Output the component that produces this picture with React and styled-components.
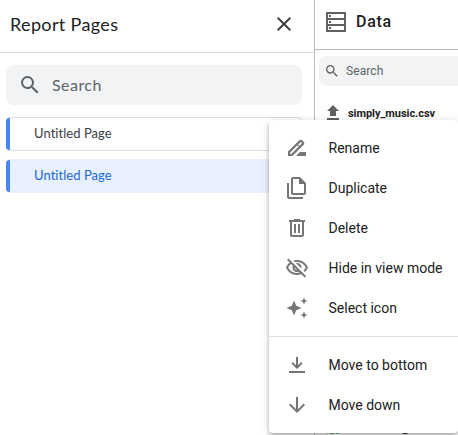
import React from 'react';
import styled, { createGlobalStyle } from 'styled-components';

const GlobalStyle = createGlobalStyle`
  * { box-sizing: border-box; }
  body { margin: 0; overflow: hidden; background: #fff; font-family: Roboto, "Liberation Sans", sans-serif; }
`;

const Screen = styled.main`
  position: relative;
  display: flex;
  width: 458px;
  height: 435px;
  overflow: hidden;
`;

const PagesPanel = styled.aside`
  width: 314px;
  flex: none;
`;

const PagesHeader = styled.header`
  display: flex;
  align-items: center;
  justify-content: space-between;
  height: 53px;
  padding: 0 18px 4px 10px;
  border-bottom: 1px solid #dadce0;
`;

const PagesTitle = styled.h1`
  margin: 0;
  font: 400 18px/24px Lato, sans-serif;
  letter-spacing: 0.35px;
  color: #202124;
`;

const Icon = styled.svg`
  display: block;
  flex: none;
  width: ${(p) => p.$size || 24}px;
  height: ${(p) => p.$size || 24}px;
  fill: ${(p) => p.$color || '#757575'};
`;

const PagesSearch = styled.div`
  display: flex;
  align-items: center;
  gap: 10px;
  width: 296px;
  height: 40px;
  margin: 12px 0 12px 6px;
  padding: 0 12px 1px;
  border-radius: 8px;
  background: #f1f3f4;
  color: #5f6368;
  font: 400 16px/24px Lato, sans-serif;
  letter-spacing: 0.45px;
`;

const PageItem = styled.div`
  display: flex;
  align-items: center;
  width: 296px;
  height: 34px;
  margin: 0 0 8px 6px;
  padding: 0 0 2px 28px;
  border: solid ${(p) => (p.$active ? '#e8f0fe' : '#dadce0')};
  border-width: 1px 1px 1px 0;
  border-radius: 4px;
  background: linear-gradient(to right, #4285f4 4px, transparent 4px) border-box,
    ${(p) => (p.$active ? '#e8f0fe' : '#fff')};
  color: ${(p) => (p.$active ? '#1967d2' : '#3c4043')};
  font: 400 13px/20px Lato, sans-serif;
  letter-spacing: 0.05px;
`;

const DataPanel = styled.section`
  flex: 1;
  min-width: 0;
  border-left: 1px solid #b9bac0;
  overflow: hidden;
`;

const DataHeader = styled.header`
  display: flex;
  align-items: center;
  gap: 10px;
  height: 50px;
  padding: 0 0 6px 11px;
  border-bottom: 1px solid #b9bac0;
`;

const DataTitle = styled.h2`
  margin: 0;
  font: 500 16px/24px Roboto, sans-serif;
  letter-spacing: 0.7px;
  color: #202124;
`;

const DataSearch = styled.div`
  display: flex;
  align-items: center;
  gap: 6px;
  width: 180px;
  height: 30px;
  margin: 6px 0 0 4px;
  padding-left: 5px;
  border-radius: 8px;
  background: #f1f3f4;
  color: #5f6368;
  font-size: 12px;
  letter-spacing: 0.1px;
`;

const SourceRow = styled.div`
  display: flex;
  align-items: center;
  gap: 7px;
  height: 24px;
  margin-top: 15px;
  padding-left: 10px;
  font-size: 11px;
  font-weight: 700;
  letter-spacing: -0.04px;
  color: #212121;
`;

const FieldRow = styled.div`
  display: flex;
  align-items: center;
  gap: 7px;
  height: 18px;
  margin-top: 295px;
  padding-left: 11px;
  font-size: 11px;
  letter-spacing: -0.6px;
  color: #212121;
`;

const FieldType = styled.span`
  width: 15px;
  color: #34a853;
  font-size: 7px;
  letter-spacing: 0;
  line-height: 12px;
  padding-top: 6px;
`;

const Menu = styled.nav`
  position: absolute;
  left: 269px;
  top: 120px;
  width: 189px;
  height: 313px;
  padding: 8px 0;
  border-radius: 4px;
  background: #fff;
  box-shadow: 0 2px 4px -1px rgba(0, 0, 0, 0.2), 0 4px 5px rgba(0, 0, 0, 0.14), 0 1px 10px rgba(0, 0, 0, 0.12);
`;

const MenuItem = styled.div`
  display: flex;
  align-items: center;
  gap: 19.5px;
  height: 40px;
  padding-left: 16px;
  font-size: 14px;
  line-height: 20px;
  white-space: nowrap;
  color: #212121;
`;

const MenuDivider = styled.hr`
  height: 1px;
  margin: 8px 0;
  border: 0;
  background: #dfdfdf;
`;

const SearchPath = 'M15.5 14h-.79l-.28-.27A6.47 6.47 0 0 0 16 9.5 6.5 6.5 0 1 0 9.5 16c1.61 0 3.09-.59 4.23-1.57l.27.28v.79l5 4.99L20.49 19l-4.99-5zm-6 0C7.01 14 5 11.99 5 9.5S7.01 5 9.5 5 14 7.01 14 9.5 11.99 14 9.5 14z';

const actions = [
  { label: 'Rename', path: 'M15 16l-4 4h10v-4zM3 15.6V20h4.4L18.7 8.7c.8-.8.8-2 0-2.8l-1.6-1.6c-.8-.8-2-.8-2.8 0zM6.3 18H5v-1.3l7.4-7.4 1.3 1.3zM14.5 9.8l-1.3-1.3L15.7 6l1.3 1.3z' },
  { label: 'Duplicate', path: 'M18 23H4c-1.1 0-2-.9-2-2V7h2v14h14v2zM15 1H8c-1.1 0-1.99.9-1.99 2L6 17c0 1.1.89 2 1.99 2H19c1.1 0 2-.9 2-2V7l-6-6zM8 17V3h6v5h5v9H8z' },
  { label: 'Delete', path: 'M15 4V3H9v1H4v2h1v13c0 1.1.9 2 2 2h10c1.1 0 2-.9 2-2V6h1V4h-5zm2 15H7V6h10v13zM9 8h2v9H9zM13 8h2v9h-2z' },
  { label: 'Hide in view mode', path: 'M12 6c3.79 0 7.17 2.13 8.82 5.5-.59 1.22-1.42 2.27-2.41 3.12l1.41 1.41c1.39-1.23 2.49-2.77 3.18-4.53C21.27 7.11 17 4 12 4c-1.27 0-2.49.2-3.64.57l1.65 1.65C10.66 6.09 11.32 6 12 6zm-1.07 1.14L13 9.21c.57.25 1.03.71 1.28 1.28l2.07 2.07c.08-.34.14-.7.14-1.07C16.5 9.01 14.48 7 12 7c-.37 0-.72.05-1.07.14zM2.01 3.87l2.68 2.68C3.06 7.83 1.77 9.53 1 11.5 2.73 15.89 7 19 12 19c1.52 0 2.98-.29 4.32-.82l3.42 3.42 1.41-1.41L3.42 2.45 2.01 3.87zm7.5 7.5l2.61 2.61c-.04.01-.08.02-.12.02-1.38 0-2.5-1.12-2.5-2.5 0-.05.01-.08.01-.13zm-3.4-3.4l1.75 1.75c-.23.55-.36 1.15-.36 1.78 0 2.48 2.02 4.5 4.5 4.5.63 0 1.23-.13 1.77-.36l.98.98c-.88.24-1.8.38-2.75.38-3.79 0-7.17-2.13-8.82-5.5.7-1.43 1.72-2.61 2.93-3.53z' },
  { label: 'Select icon', path: 'M9 4.5l2.2 5.3 5.3 2.2-5.3 2.2L9 19.5l-2.2-5.3L1.5 12l5.3-2.2zM19 1.5l1.1 2.4 2.4 1.1-2.4 1.1L19 8.5l-1.1-2.4L15.5 5l2.4-1.1zM19 15.5l1.1 2.4 2.4 1.1-2.4 1.1L19 22.5l-1.1-2.4-2.4-1.1 2.4-1.1z' },
];

const moves = [
  { label: 'Move to bottom', path: 'M11 4h2v8.2l3.1-3.1L17.5 10.5 12 16l-5.5-5.5 1.4-1.4 3.1 3.1zM4 18h16v2H4z' },
  { label: 'Move down', path: 'M20 12l-1.41-1.41L13 16.17V4h-2v12.17l-5.58-5.59L4 12l8 8 8-8z' },
];

function Glyph({ path, size, color }) {
  return (
    <Icon viewBox="0 0 24 24" $size={size} $color={color} aria-hidden="true">
      <path fillRule="evenodd" d={path} />
    </Icon>
  );
}

function MenuRow({ label, path }) {
  return (
    <MenuItem role="menuitem">
      <Glyph path={path} />
      {label}
    </MenuItem>
  );
}

export default function App() {
  return (
    <>
      <GlobalStyle />
      <Screen>
        <PagesPanel>
          <PagesHeader>
            <PagesTitle>Report Pages</PagesTitle>
            <Glyph color="#3c4043" path="M19 6.41 17.59 5 12 10.59 6.41 5 5 6.41 10.59 12 5 17.59 6.41 19 12 13.41 17.59 19 19 17.59 13.41 12z" />
          </PagesHeader>
          <PagesSearch>
            <Glyph color="#5f6368" path={SearchPath} />
            Search
          </PagesSearch>
          <PageItem>Untitled Page</PageItem>
          <PageItem $active>Untitled Page</PageItem>
        </PagesPanel>
        <DataPanel>
          <DataHeader>
            <Icon viewBox="0 0 20 20" $size={20} $color="#616161">
              <path fillRule="evenodd" d="M0 0h20v20H0zM2 2v4h16V2zM2 8v4h16V8zM2 14v4h16v-4z" />
              <path d="M3 3h2v2H3zM3 9h2v2H3zM3 15h2v2H3z" />
            </Icon>
            <DataTitle>Data</DataTitle>
          </DataHeader>
          <DataSearch>
            <Glyph size={16} color="#616161" path={SearchPath} />
            Search
          </DataSearch>
          <SourceRow>
            <Icon viewBox="0 0 16 16" $size={16} $color="#616161">
              <path d="M8 0l6 6h-3v5H5V6H2zM2 13h12v2H2z" />
            </Icon>
            simply_music.csv
          </SourceRow>
          <FieldRow>
            <FieldType>ABC</FieldType>
            instrumental_id
          </FieldRow>
        </DataPanel>
        <Menu role="menu">
          {actions.map((a) => <MenuRow key={a.label} {...a} />)}
          <MenuDivider />
          {moves.map((a) => <MenuRow key={a.label} {...a} />)}
        </Menu>
      </Screen>
    </>
  );
}
